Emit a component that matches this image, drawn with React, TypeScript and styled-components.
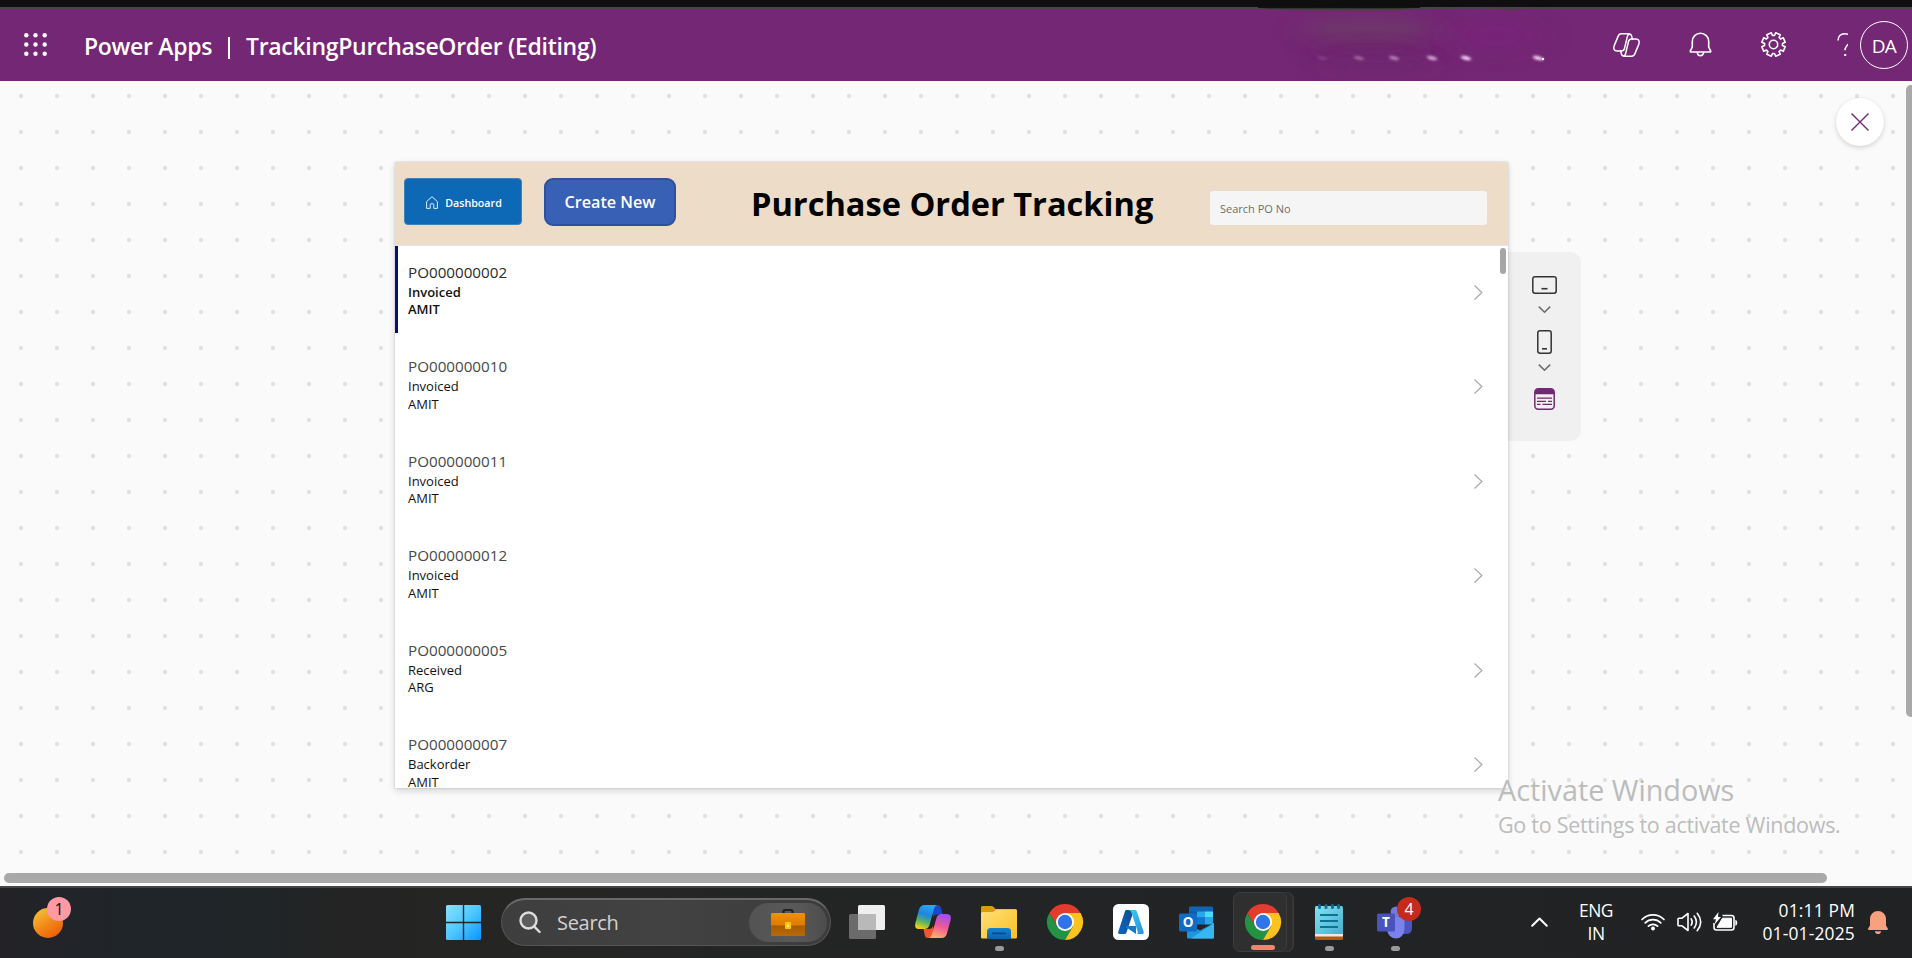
import React from 'react';
import styled, { createGlobalStyle, css } from 'styled-components';

const GlobalStyle = createGlobalStyle`
  * { box-sizing: border-box; }
  body {
    margin: 0;
    overflow: hidden;
    font-family: 'Open Sans', 'Noto Sans', sans-serif;
  }
  svg { display: block; flex: none; overflow: visible; }
`;

const Page = styled.div`
  display: flex;
  flex-direction: column;
  width: 1912px;
  height: 958px;
  background: #fafafa;
`;

/* ---------- suite header ---------- */

const TopStrip = styled.div`
  flex: none;
  height: 9px;
  background: #0f0f0f;
  border-bottom: 2px solid #474747;
`;

const SuiteHeader = styled.header`
  position: relative;
  flex: none;
  display: flex;
  align-items: center;
  height: 72px;
  padding: 0 4px 1px 24px;
  background: #742774;
  color: #fff;
`;

const SuiteTitle = styled.h1`
  display: flex;
  align-items: center;
  margin: 0 auto 0 37px;
  padding-top: 3px;
  font-size: 23px;
  font-weight: 600;
  line-height: 32px;
  white-space: nowrap;
`;

const AppLabel = styled.span`
  width: 129px;
  letter-spacing: -0.3px;
`;

const Divider = styled.span`
  width: 2px;
  height: 22px;
  margin: 4px 16px 0 15px;
  background: #fff;
`;

const FileLabel = styled.span`
  width: 351px;
  letter-spacing: -0.3px;
`;

const SuiteActions = styled.div`
  display: flex;
  align-items: center;
`;

const ActionSlot = styled.div<{ $w: number }>`
  display: flex;
  justify-content: center;
  width: ${(p) => p.$w}px;
`;

const HelpMark = styled.span`
  width: 11px;
  height: 28px;
  margin-left: 27px;
  overflow: hidden;
`;

const Avatar = styled.div`
  display: flex;
  align-items: center;
  justify-content: center;
  width: 48px;
  height: 48px;
  margin: 1px 0 0 12px;
  border: 1px solid #fff;
  border-radius: 50%;
  font-size: 19px;
  letter-spacing: -0.6px;
  padding-top: 2px;
`;

const Smear = styled.svg`
  position: absolute;
  left: 1230px;
  top: -9px;
`;

/* ---------- canvas ---------- */

const Canvas = styled.main`
  position: relative;
  flex: 1;
  display: grid;
  grid-template-columns: 1fr 6px;
  grid-template-rows: 1fr 10px;
  padding-bottom: 3px;
  background-color: #fafafa;
  background-image: radial-gradient(circle at 50% 50%, #e0e0e0 1.8px, transparent 2.4px);
  background-size: 36px 36px;
  background-position: 3px -3px;
`;

const Stage = styled.section`
  display: flex;
  align-items: flex-start;
  padding: 81px 0 0 395px;
`;

const VerticalThumb = styled.div`
  height: 632px;
  margin-top: 4px;
  background: #a9a9a9;
  border-radius: 5px 0 0 5px;
`;

const HorizontalThumb = styled.div`
  width: 1823px;
  margin-left: 4px;
  background: #a9a9a9;
  border-radius: 5px;
`;

const AppScreen = styled.article`
  position: relative;
  z-index: 1;
  display: flex;
  flex-direction: column;
  width: 1113px;
  height: 626px;
  background: #fff;
  box-shadow: 0 0 2px rgba(0, 0, 0, 0.18), 0 3px 7px rgba(0, 0, 0, 0.14);
`;

const ScreenHeader = styled.div`
  flex: none;
  display: flex;
  height: 84px;
  padding-left: 9px;
  background: #eddcc7;
  border-bottom: 1px solid #e4e4ea;
`;

const buttonBase = css`
  display: flex;
  align-items: center;
  justify-content: center;
  border: 0;
  color: #fff;
  font-family: inherit;
`;

const DashboardButton = styled.button`
  ${buttonBase}
  gap: 7px;
  width: 118px;
  height: 47px;
  margin-top: 16px;
  padding: 2px 0 0 2px;
  border: 1px solid #3c82bd;
  border-radius: 4px;
  background: #0d68b6;
  font-size: 10.7px;
  font-weight: 600;
`;

const CreateButton = styled.button`
  ${buttonBase}
  width: 132px;
  height: 48px;
  margin: 16px 0 0 22px;
  padding: 0;
  border: 2px solid #2f509c;
  border-radius: 9px;
  background: #3860b4;
  font-size: 16.2px;
  font-weight: 600;
`;

const ScreenTitle = styled.h2`
  width: 459px;
  margin: 19px 0 0 75px;
  color: #000;
  font-size: 32.6px;
  font-weight: 700;
  line-height: 46px;
  white-space: nowrap;
`;

const SearchField = styled.input`
  width: 277px;
  height: 34px;
  margin-top: 29px;
  padding: 1px 10px 0;
  border: 0;
  border-radius: 3px;
  background: #f5f5f5;
  font-family: inherit;
  font-size: 11px;
  &::placeholder { color: #6e6e6e; opacity: 1; }
`;

const Gallery = styled.div`
  position: relative;
  flex: 1;
  overflow: hidden;
`;

const GalleryThumb = styled.div`
  position: absolute;
  top: 2px;
  right: 2px;
  width: 6px;
  height: 26px;
  border-radius: 3px;
  background: #a6a6a6;
`;

const OrderRow = styled.div<{ $selected: boolean }>`
  display: flex;
  justify-content: space-between;
  height: 88px;
  margin-bottom: 6.5px;
  padding: 14.7px 25px 0 10px;
  border-left: 3px solid ${(p) => (p.$selected ? '#00126b' : 'transparent')};
  font-weight: ${(p) => (p.$selected ? 600 : 400)};
  &:first-of-type { margin-top: -1px; }
`;

const OrderNumber = styled.div<{ $selected: boolean }>`
  color: ${(p) => (p.$selected ? '#2b2b2b' : '#484848')};
  font-size: 15.2px;
  font-weight: ${(p) => (p.$selected ? 500 : 400)};
  line-height: 24px;
`;

const OrderLine = styled.div`
  color: #111;
  font-size: 13px;
  line-height: 17.6px;
`;

const ArrowBox = styled.div`
  padding-top: 25.3px;
`;

const DevicePanel = styled.aside`
  display: flex;
  flex-direction: column;
  align-items: center;
  width: 73px;
  height: 189px;
  margin-top: 90px;
  padding-top: 24px;
  border-radius: 0 11px 11px 0;
  background: #f0f0f0;
`;

const PanelIcon = styled.div<{ $gap: number }>`
  margin-bottom: ${(p) => p.$gap}px;
`;

const CloseButton = styled.button`
  position: absolute;
  top: 17px;
  right: 28px;
  display: flex;
  align-items: center;
  justify-content: center;
  width: 48px;
  height: 48px;
  padding: 0;
  border: 0;
  border-radius: 50%;
  background: #fff;
  box-shadow: 0 2px 5px rgba(0, 0, 0, 0.14), 0 0 2px rgba(0, 0, 0, 0.06);
`;

const Watermark = styled.div`
  position: absolute;
  z-index: 2;
  left: 1498px;
  top: 688px;
  color: #bcbcbc;
  white-space: nowrap;
`;

const WatermarkTitle = styled.div`
  font-size: 28.8px;
  line-height: 42px;
`;

const WatermarkText = styled.div`
  font-size: 21.5px;
  line-height: 28px;
  letter-spacing: -0.28px;
`;

/* ---------- taskbar ---------- */

const Taskbar = styled.footer`
  position: relative;
  flex: none;
  display: flex;
  align-items: center;
  height: 72px;
  padding: 0 0 2px 33px;
  border-top: 2px solid #454745;
  background: linear-gradient(90deg, #232327 0, #20252a 130px, #202528 250px, #242424 340px, #252524 470px, #232425 1000px, #212224 1912px);
  color: #fff;
`;

const WidgetSlot = styled.div`
  width: 413px;
  padding-top: 1px;
`;

const SearchBox = styled.div`
  display: flex;
  align-items: center;
  width: 330px;
  height: 48px;
  margin: 0 3px 0 20px;
  padding: 0 3px 0 17px;
  border: 1px solid #555;
  border-top: 2px solid #6a6a6a;
  border-radius: 24px;
  background: linear-gradient(90deg, #3e3e3e, #424242 50%, #3c3c3c);
`;

const SearchLabel = styled.span`
  margin: 0 auto 0 16px;
  color: #d2d2d2;
  font-size: 20px;
  line-height: 26px;
  letter-spacing: -0.3px;
`;

const SearchHighlight = styled.div`
  display: flex;
  align-items: center;
  justify-content: center;
  width: 78px;
  height: 39px;
  border-radius: 20px;
  background: linear-gradient(90deg, #535353, #595959 60%, #4c4c4c);
`;

const AppSlot = styled.div<{ $active?: boolean }>`
  position: relative;
  display: flex;
  align-items: center;
  justify-content: center;
  width: ${(p) => (p.$active ? 54 : 66)}px;
  height: 60px;
  ${(p) =>
    p.$active &&
    css`
      margin: 0 9px 0 3px;
      padding-left: 6px;
      border: 1px solid #3d3d3d;
      border-radius: 7px;
      background: #2f2f2f;
      box-shadow: 6px 0 0 -0.5px #2c2c2c, 7px 0 0 #3a3a3a;
    `}
`;

const RunMark = styled.span<{ $active?: boolean }>`
  position: absolute;
  bottom: 1px;
  left: 50%;
  width: ${(p) => (p.$active ? 24 : 9)}px;
  height: 5px;
  margin-left: ${(p) => (p.$active ? -9 : -4)}px;
  border-radius: 3px;
  background: ${(p) => (p.$active ? '#f7826b' : '#9a9a9a')};
`;

const Badge = styled.span`
  position: absolute;
  top: 5px;
  left: 35px;
  display: flex;
  align-items: center;
  justify-content: center;
  width: 24px;
  height: 24px;
  border-radius: 50%;
  background: #c42b1c;
  color: #fff;
  font-size: 16px;
`;

const WeatherWidget = styled.div`
  position: relative;
  width: 30px;
  height: 30px;
  border-radius: 50%;
  background: linear-gradient(145deg, #f2c038 10%, #f28a1a 50%, #f0600a 85%);
`;

const WeatherBadge = styled(Badge)`
  top: -11px;
  left: 14px;
  background: #ff99a4;
  color: #111;
`;

const Tray = styled.div`
  display: flex;
  align-items: center;
  margin-left: auto;
  padding-right: 24px;
`;

const TrayText = styled.div<{ $align: 'center' | 'right'; $w: number; $tight: number }>`
  width: ${(p) => p.$w}px;
  font-size: 17.4px;
  line-height: 23.5px;
  letter-spacing: ${(p) => p.$tight}px;
  text-align: ${(p) => p.$align};
  white-space: nowrap;
`;

const TraySpacer = styled.div<{ $w: number }>`
  width: ${(p) => p.$w}px;
`;

/* ---------- icons ---------- */

const Waffle = () => (
  <svg width="23" height="23" viewBox="0 0 23 23" fill="#fff">
    {[2.3, 11.5, 20.7].map((y) =>
      [2.3, 11.5, 20.7].map((x) => <circle key={`${x}-${y}`} cx={x} cy={y} r="2.2" />)
    )}
  </svg>
);

const COPILOT_HALF =
  'M19.6 7L18.7 3.4Q18 .8 15.6 .8H8.500Q5.800 .8 5 3.600L1.200 12.600Q-.3 18 4.200 18H8.600Q10.800 18 11.500 15.500L14.200 4.200Q15 .8 16.800 1';

const CopilotOutline = () => (
  <svg width="27" height="24" viewBox="0 0 27 24" fill="none" stroke="#fff" strokeWidth="1.5" strokeLinejoin="round">
    <path d={COPILOT_HALF} />
    <path d={COPILOT_HALF} transform="rotate(180 13.5 12)" />
  </svg>
);

const BellOutline = () => (
  <svg width="23" height="25" viewBox="0 0 23 25" fill="none" stroke="#fff" strokeWidth="1.6" strokeLinejoin="round">
    <path d="M3.3 9.4a8.2 8.2 0 0 1 16.4 0V15l2 4.2q.2.8-.6.8H1.9q-.8 0-.6-.8l2-4.2z" />
    <path d="M8.4 20.2a3.1 3.4 0 0 0 6.2 0" />
  </svg>
);

const gearPath = (() => {
  const steps: string[] = [];
  for (let i = 0; i < 8; i++) {
    const mid = 22.5 + i * 45;
    [
      [mid - 16, 9],
      [mid - 12, 11.9],
      [mid + 12, 11.9],
      [mid + 16, 9],
    ].forEach(([deg, r]) => {
      const a = (deg * Math.PI) / 180;
      steps.push(`${(12.5 + r * Math.cos(a)).toFixed(2)} ${(12.5 + r * Math.sin(a)).toFixed(2)}`);
    });
  }
  return `M${steps.join('L')}Z`;
})();

const GearOutline = () => (
  <svg width="25" height="25" viewBox="0 0 25 25" fill="none" stroke="#fff" strokeWidth="1.6" strokeLinejoin="round">
    <path d={gearPath} />
    <circle cx="12.5" cy="12.5" r="4.2" />
  </svg>
);

const HelpGlyph = () => (
  <svg width="14" height="28" viewBox="0 0 14 28" fill="none" stroke="#fff" strokeWidth="1.5">
    <path d="M1 9.5C1 5.5 3.6 2.7 7.8 2.7s6.4 2.6 6.4 5.6c0 4.6-6.2 5-6.2 11" />
    <path d="M7.2 24h2" strokeWidth="2" />
  </svg>
);

const CrossIcon = () => (
  <svg width="18" height="18" viewBox="0 0 18 18" stroke="#742774" strokeWidth="1.4" fill="none">
    <path d="M.5.5l17 17M17.5.5l-17 17" />
  </svg>
);

const HomeIcon = () => (
  <svg width="12" height="13" viewBox="0 0 12 13" fill="none" stroke="#e2edf7" strokeWidth="1" strokeLinejoin="round">
    <path d="M.6 5.6L6 .7l5.4 4.9v6.8H7.8V8.6q0-.8-.8-.8H5q-.8 0-.8.8v3.8H.6z" />
  </svg>
);

const RowArrow = () => (
  <svg width="9" height="15" viewBox="0 0 9 15" fill="none" stroke="#a6a6a6" strokeWidth="1.1">
    <path d="M.5.5l7.4 7-7.4 7" />
  </svg>
);

const TabletIcon = () => (
  <svg width="25" height="18" viewBox="0 0 25 18" fill="none" stroke="#333" strokeWidth="1.5">
    <rect x=".8" y=".8" width="23.4" height="16.4" rx="2.2" />
    <path d="M9.5 12.7h6" strokeWidth="1.6" />
  </svg>
);

const PhoneIcon = () => (
  <svg width="15" height="24" viewBox="0 0 15 24" fill="none" stroke="#333" strokeWidth="1.5">
    <rect x=".8" y=".8" width="13.4" height="22.4" rx="2.2" />
    <path d="M5 18.8h5" strokeWidth="1.6" />
  </svg>
);

const DownIcon = () => (
  <svg width="13" height="7" viewBox="0 0 13 7" fill="none" stroke="#6e6e6e" strokeWidth="1.6">
    <path d="M.8.6l5.700 5.600L12.200.6" />
  </svg>
);

const FormIcon = () => (
  <svg width="21" height="22" viewBox="0 0 21 22" fill="none" stroke="#742774" strokeWidth="1.5">
    <rect x=".8" y=".8" width="19.4" height="20.4" rx="3.5" />
    <path d="M1 6.200V4Q1 1 4 1h13q3 0 3 3v2.200z" fill="#742774" stroke="none" />
    <path d="M3 10.200h15M3 13.300h9M14 13.300h4M3 16.300h3.500M8.500 16.300h9.500" strokeWidth="1.2" />
  </svg>
);

const WindowsLogo = () => (
  <svg width="35" height="35" viewBox="0 0 35 35">
    <defs>
      <linearGradient id="win" gradientUnits="userSpaceOnUse" x1="0" y1="0" x2="35" y2="35">
        <stop offset="0" stopColor="#8be0ff" />
        <stop offset=".5" stopColor="#4dc8ff" />
        <stop offset="1" stopColor="#0a93ff" />
      </linearGradient>
    </defs>
    <g fill="url(#win)">
      <path d="M1.500 0H16.800V16.800H0V1.500Q0 0 1.500 0z" />
      <path d="M18.200 0H33.500Q35 0 35 1.500V16.800H18.200z" />
      <path d="M0 18.200H16.800V35H1.500Q0 35 0 33.500z" />
      <path d="M18.200 18.200H35V33.500Q35 35 33.500 35H18.200z" />
    </g>
  </svg>
);

const Magnifier = () => (
  <svg width="22" height="23" viewBox="0 0 22 23" fill="none" stroke="#dcdde0" strokeWidth="2.4" strokeLinecap="round">
    <circle cx="9.5" cy="9.5" r="8" fill="#5c5c5c" />
    <path d="M15.300 15.600l5.300 5.400" />
  </svg>
);

const Briefcase = () => (
  <svg width="34" height="27" viewBox="0 0 34 27">
    <defs>
      <linearGradient id="bcTop" x1="0" y1="0" x2="0" y2="1">
        <stop offset="0" stopColor="#ef9400" />
        <stop offset="1" stopColor="#dc7a00" />
      </linearGradient>
      <linearGradient id="bcLow" x1="0" y1="0" x2="0" y2="1">
        <stop offset="0" stopColor="#8e4800" />
        <stop offset="1" stopColor="#b86a05" />
      </linearGradient>
    </defs>
    <path d="M12.500 4.500V2.500q0-1.500 1.500-1.500h6q1.500 0 1.500 1.500v2" fill="none" stroke="#222" strokeWidth="2.2" />
    <rect y="4" width="34" height="23" rx="1.5" fill="url(#bcLow)" />
    <path d="M0 16.500V5.500Q0 4 1.500 4h31Q34 4 34 5.500v11z" fill="url(#bcTop)" />
    <rect x="14" y="13" width="6" height="7" rx=".8" fill="#ffc400" />
    <rect x="16" y="15.5" width="2" height="2.5" fill="#fff07a" />
  </svg>
);

const TaskView = () => (
  <svg width="36" height="34" viewBox="0 0 36 34">
    <rect y="9" width="27" height="25" rx="1.5" fill="#6b6b6b" />
    <rect x="9" width="27" height="25" rx="1.5" fill="#efefef" />
    <path d="M9 9h18v16H10.500Q9 25 9 23.500z" fill="#b9b9b9" />
  </svg>
);

const CopilotColor = () => (
  <svg width="36" height="34" viewBox="0 0 36 34">
    <defs>
      <linearGradient id="cpA" x1=".6" y1="0" x2=".3" y2="1">
        <stop offset="0" stopColor="#2aa7f0" />
        <stop offset=".4" stopColor="#1e86dd" />
        <stop offset=".7" stopColor="#58b36a" />
        <stop offset="1" stopColor="#f3d30c" />
      </linearGradient>
      <linearGradient id="cpB" x1=".6" y1="0" x2=".3" y2="1">
        <stop offset="0" stopColor="#a44cf0" />
        <stop offset=".5" stopColor="#ee5a94" />
        <stop offset="1" stopColor="#ffb070" />
      </linearGradient>
    </defs>
    <path d="M16 0h6.500Q25 0 26 3l1.800 6.500H22Q19 9.500 18.200 12z" fill="#1c47c8" />
    <path d="M20 33h-7Q10.500 33 9.800 30.500L8.500 24H14q3 0 4-3z" fill="#f2542f" />
    <path d="M9.500 0H22q-2 .7-2.800 3.300L14.500 20q-1.200 4-5 4H4Q-1 24 .4 18L4 4.500Q5.500 0 9.500 0z" fill="url(#cpA)" />
    <path d="M26.500 33H14q2-.7 2.800-3.300L21.500 13q1.200-4 5-4H32q5 0 3.600 6L32 28.500Q30.500 33 26.500 33z" fill="url(#cpB)" />
  </svg>
);

const Explorer = () => (
  <svg width="36" height="33" viewBox="0 0 36 33">
    <defs>
      <linearGradient id="exF" x1="0" y1="0" x2="1" y2="1">
        <stop offset="0" stopColor="#ffe07a" />
        <stop offset="1" stopColor="#fcbf22" />
      </linearGradient>
      <linearGradient id="exB" x1="0" y1="0" x2="0" y2="1">
        <stop offset="0" stopColor="#1283d2" />
        <stop offset="1" stopColor="#0e62ab" />
      </linearGradient>
    </defs>
    <path d="M0 1.500Q0 0 1.500 0h9q1 0 1.800.8L15 3.200h19.500Q36 3.200 36 4.700V12H0z" fill="#dc9c06" />
    <path d="M0 7.500Q0 6 1.500 6H12l3.500-2.800h19Q36 3.200 36 4.700V31.500q0 1-1.200 1H1.200Q0 32.500 0 31.500z" fill="url(#exF)" />
    <path d="M6 33V25.500Q6 22 9.500 22h17q3.500 0 3.500 3.500V33z" fill="url(#exB)" />
    <path d="M11 27.400h14" stroke="#0b4684" strokeWidth="1.6" />
  </svg>
);

const Chrome = () => (
  <svg width="36" height="36" viewBox="0 0 48 48">
    <path d="M24 12h20.800A24 24 0 0 0 3.200 12l10.400 18z" fill="#e33b2e" />
    <path d="M13.600 30L3.200 12A24 24 0 0 0 24 48l10.400-18z" fill="#229342" />
    <path d="M34.400 30L24 48A24 24 0 0 0 44.800 12H24z" fill="#fcc31e" />
    <circle cx="24" cy="24" r="12" fill="#fff" />
    <circle cx="24" cy="24" r="9.6" fill="#2f74ea" />
  </svg>
);

const Azure = () => (
  <svg width="36" height="36" viewBox="0 0 36 36">
    <defs>
      <linearGradient id="azL" x1="1" y1="0" x2="0" y2="1">
        <stop offset="0" stopColor="#114a8b" />
        <stop offset="1" stopColor="#0c66bf" />
      </linearGradient>
      <linearGradient id="azR" x1="0" y1="0" x2="1" y2="1">
        <stop offset="0" stopColor="#3ccbf4" />
        <stop offset="1" stopColor="#2790df" />
      </linearGradient>
    </defs>
    <rect width="36" height="36" rx="5.5" fill="#fff" />
    <path d="M13.500 6H21L13.500 28.500q-.5 1.500-2 1.500H6.500q-2 0-1.300-2L12 7.200Q12.400 6 13.500 6z" fill="url(#azL)" />
    <path d="M13 22h10v8l-9.500-6.500q-1-.8-.5-1.500z" fill="#0f78d2" />
    <path d="M15 6h7q1.300 0 1.700 1.200L30.700 28q.7 2-1.300 2H24q1.300-.6.700-2.400L18 7.500Q17.500 6 15 6z" fill="url(#azR)" />
  </svg>
);

const Outlook = () => (
  <svg width="36" height="33" viewBox="0 0 36 33">
    <path d="M10 2Q10 .5 11.500.5h21Q34 .5 34 2v16H10z" fill="#1066b5" />
    <path d="M10 5.500h8v6h-8z" fill="#0f5ea8" />
    <path d="M18 5.500h8v6h-8z" fill="#28a8ea" />
    <path d="M26 5.500h8v6h-8z" fill="#50d9ff" />
    <path d="M10 11.500h8v7h-8z" fill="#0a4f93" />
    <path d="M18 11.500h8v7h-8z" fill="#0d78d0" />
    <path d="M26 11.500h8v7h-8z" fill="#28a8ea" />
    <path d="M8 17l13 7.500L35 17v14.500q0 1-1.200 1H9.200Q8 32.500 8 31.500z" fill="#1f95e0" />
    <path d="M35 17v14.500q0 1-1.200 1H12z" fill="#35b8f1" />
    <rect y="7.5" width="18" height="18" rx="1.5" fill="#0f6cc6" />
    <text x="9" y="21.3" textAnchor="middle" fontFamily="Open Sans, sans-serif" fontWeight="700" fontSize="13.5" fill="#fff">O</text>
  </svg>
);

const Notepad = () => (
  <svg width="28" height="36" viewBox="0 0 28 36">
    <defs>
      <linearGradient id="npP" x1="0" y1="0" x2="1" y2="1">
        <stop offset="0" stopColor="#80e2f4" />
        <stop offset="1" stopColor="#48aecb" />
      </linearGradient>
    </defs>
    <rect y="26" width="28" height="10" rx="1.5" fill="#b05a0c" />
    <rect y="24" width="28" height="8.5" fill="#ece8e6" />
    <path d="M0 3.500Q0 2 1.500 2h25Q28 2 28 3.500V30H0z" fill="url(#npP)" />
    <path d="M4.500 1.500v2M11 1.500v2M17.500 1.500v2M23.500 1.500v2" stroke="#106e90" strokeWidth="3" strokeLinecap="round" />
    <path d="M5 11h18M5 17h18M5 23h18" stroke="#0d7395" strokeWidth="1.8" />
  </svg>
);

const Teams = () => (
  <svg width="36" height="33" viewBox="0 0 36 33">
    <circle cx="19" cy="6" r="5.5" fill="#7378dc" />
    <path d="M24 11h11v12q-.5 5-6 5h-5z" fill="#4c54bd" />
    <path d="M10 11h16.500q1 0 1 1v11q-.8 9.500-9 9.500-6.500-.5-8.500-8z" fill="#7b83eb" />
    <rect y="7.5" width="18" height="18" rx="1.5" fill="#4a52bb" />
    <text x="9" y="21.3" textAnchor="middle" fontFamily="Open Sans, sans-serif" fontWeight="700" fontSize="13.5" fill="#fff">T</text>
  </svg>
);

const UpIcon = () => (
  <svg width="17" height="10" viewBox="0 0 17 10" fill="none" stroke="#fff" strokeWidth="2" strokeLinecap="round" strokeLinejoin="round">
    <path d="M1.200 8.800l7.300-7.300 7.300 7.300" />
  </svg>
);

const WifiIcon = () => (
  <svg width="24" height="18" viewBox="0 0 24 18" fill="none" stroke="#fff" strokeWidth="1.7" strokeLinecap="round">
    <path d="M1 6.500a15.500 15.500 0 0 1 22 0M4.200 9.900a11 11 0 0 1 15.600 0M7.400 13.200a6.500 6.500 0 0 1 9.200 0" />
    <circle cx="12" cy="15.6" r="2" fill="#fff" stroke="none" />
  </svg>
);

const SpeakerIcon = () => (
  <svg width="25" height="20" viewBox="0 0 25 20" fill="none" stroke="#fff" strokeWidth="1.6" strokeLinecap="round" strokeLinejoin="round">
    <path d="M1 7q0-.8.800-.8H5L11 1.500v17L5 13.800H1.800Q1 13.800 1 13z" />
    <path d="M14.200 6.800q2 3.200 0 6.400M17.200 4q4.400 6 0 12M20.200 1.300q7 8.700 0 17.400" />
  </svg>
);

const BatteryIcon = () => (
  <svg width="25" height="20" viewBox="0 0 25 20" fill="none" stroke="#fff" strokeWidth="1.6">
    <path d="M9.500 3.500h9q2.500 0 2.500 2.500v9.500q0 2.500-2.500 2.500H3.500Q1 18 1 15.500V11" />
    <path d="M9.500 6.200h9V15.300H4z" fill="#fff" stroke="#fff" strokeWidth="1" />
    <path d="M22.300 7.700q2 .3 2 3t-2 3z" fill="#fff" stroke="none" />
    <path d="M5.500 0L0 7.200h3L1.500 12.500 8 5H5z" fill="#fff" stroke="none" />
  </svg>
);

const BellFilled = () => (
  <svg width="20" height="23" viewBox="0 0 20 23" fill="#f9a07f">
    <path d="M10 0a8 8 0 0 1 8 8v6.500l1.900 3q.3 1.500-1 1.500H1.100q-1.300 0-1-1.500l1.900-3V8a8 8 0 0 1 8-8z" />
    <path d="M6.800 20.200h6.400Q12.600 23 10 23t-3.200-2.800z" />
  </svg>
);

const smudges = [
  { x: 92, o: 0.12 },
  { x: 129, o: 0.35 },
  { x: 164, o: 0.5 },
  { x: 202, o: 0.75 },
  { x: 236, o: 1 },
  { x: 308, o: 1 },
];

const HeaderSmear = () => (
  <Smear width="340" height="90" viewBox="0 0 340 90">
    <defs>
      <filter id="soft" x="-50%" y="-150%" width="200%" height="400%">
        <feGaussianBlur stdDeviation="16 8" />
      </filter>
      <filter id="fine" x="-50%" y="-100%" width="200%" height="300%">
        <feGaussianBlur stdDeviation="1.5 .9" />
      </filter>
    </defs>
    <ellipse cx="138" cy="30" rx="66" ry="10" fill="#6b4265" opacity=".7" filter="url(#soft)" />
    <ellipse cx="140" cy="50" rx="60" ry="5" fill="#62225f" opacity=".7" filter="url(#soft)" />
    <ellipse cx="150" cy="66" rx="55" ry="6" fill="#6b2b70" opacity=".8" filter="url(#soft)" />
    <ellipse cx="265" cy="36" rx="45" ry="20" fill="#78207a" opacity=".6" filter="url(#soft)" />
    <path d="M28 7.500H190l-22 .500H40z" fill="#0a0a0a" stroke="#0a0a0a" strokeWidth=".6" />
    <path d="M24 9Q110 12 206 9z" fill="#46433f" />
    <path d="M270 9q10 2.500 18 0z" fill="#4c3d4b" />
    <path d="M170 81q60 1.500 118 0z" fill="#742774" />
    {smudges.map((s) => (
      <ellipse key={s.x} cx={s.x} cy="58" rx="5" ry="2" fill="#f3c8f0" opacity={s.o} transform={`rotate(14 ${s.x} 58)`} filter="url(#fine)" />
    ))}
    <circle cx="313" cy="59" r="1.2" fill="#fff" />
  </Smear>
);

/* ---------- page ---------- */

const orders = [
  { number: 'PO000000002', status: 'Invoiced', customer: 'AMIT' },
  { number: 'PO000000010', status: 'Invoiced', customer: 'AMIT' },
  { number: 'PO000000011', status: 'Invoiced', customer: 'AMIT' },
  { number: 'PO000000012', status: 'Invoiced', customer: 'AMIT' },
  { number: 'PO000000005', status: 'Received', customer: 'ARG' },
  { number: 'PO000000007', status: 'Backorder', customer: 'AMIT' },
];

export default function App() {
  return (
    <Page>
      <GlobalStyle />
      <TopStrip />
      <SuiteHeader>
        <HeaderSmear />
        <Waffle />
        <SuiteTitle>
          <AppLabel>Power Apps</AppLabel>
          <Divider />
          <FileLabel>TrackingPurchaseOrder (Editing)</FileLabel>
        </SuiteTitle>
        <SuiteActions>
          <ActionSlot $w={74}><CopilotOutline /></ActionSlot>
          <ActionSlot $w={74}><BellOutline /></ActionSlot>
          <ActionSlot $w={73}><GearOutline /></ActionSlot>
          <HelpMark><HelpGlyph /></HelpMark>
          <Avatar>DA</Avatar>
        </SuiteActions>
      </SuiteHeader>

      <Canvas>
        <Stage>
          <AppScreen>
            <ScreenHeader>
              <DashboardButton><HomeIcon />Dashboard</DashboardButton>
              <CreateButton>Create New</CreateButton>
              <ScreenTitle>Purchase Order Tracking</ScreenTitle>
              <SearchField placeholder="Search PO No" />
            </ScreenHeader>
            <Gallery>
              {orders.map((order, i) => (
                <OrderRow key={order.number} $selected={i === 0}>
                  <div>
                    <OrderNumber $selected={i === 0}>{order.number}</OrderNumber>
                    <OrderLine>{order.status}</OrderLine>
                    <OrderLine>{order.customer}</OrderLine>
                  </div>
                  <ArrowBox><RowArrow /></ArrowBox>
                </OrderRow>
              ))}
              <GalleryThumb />
            </Gallery>
          </AppScreen>
          <DevicePanel>
            <PanelIcon $gap={12}><TabletIcon /></PanelIcon>
            <PanelIcon $gap={17}><DownIcon /></PanelIcon>
            <PanelIcon $gap={10}><PhoneIcon /></PanelIcon>
            <PanelIcon $gap={17}><DownIcon /></PanelIcon>
            <FormIcon />
          </DevicePanel>
        </Stage>
        <VerticalThumb />
        <HorizontalThumb />
        <CloseButton aria-label="Close"><CrossIcon /></CloseButton>
        <Watermark>
          <WatermarkTitle>Activate Windows</WatermarkTitle>
          <WatermarkText>Go to Settings to activate Windows.</WatermarkText>
        </Watermark>
      </Canvas>

      <Taskbar>
        <WidgetSlot>
          <WeatherWidget><WeatherBadge>1</WeatherBadge></WeatherWidget>
        </WidgetSlot>
        <WindowsLogo />
        <SearchBox>
          <Magnifier />
          <SearchLabel>Search</SearchLabel>
          <SearchHighlight><Briefcase /></SearchHighlight>
        </SearchBox>
        <AppSlot><TaskView /></AppSlot>
        <AppSlot><CopilotColor /></AppSlot>
        <AppSlot><Explorer /><RunMark /></AppSlot>
        <AppSlot><Chrome /></AppSlot>
        <AppSlot><Azure /></AppSlot>
        <AppSlot><Outlook /></AppSlot>
        <AppSlot $active><Chrome /><RunMark $active /></AppSlot>
        <AppSlot><Notepad /><RunMark /></AppSlot>
        <AppSlot><Teams /><Badge>4</Badge><RunMark /></AppSlot>
        <Tray>
          <UpIcon />
          <TraySpacer $w={28} />
          <TrayText $align="center" $w={40} $tight={-0.4}>ENG<br />IN</TrayText>
          <TraySpacer $w={25} />
          <WifiIcon />
          <TraySpacer $w={12} />
          <SpeakerIcon />
          <TraySpacer $w={11} />
          <BatteryIcon />
          <TrayText $align="right" $w={117} $tight={0.18}>01:11 PM<br />01-01-2025</TrayText>
          <TraySpacer $w={13} />
          <BellFilled />
        </Tray>
      </Taskbar>
    </Page>
  );
}
